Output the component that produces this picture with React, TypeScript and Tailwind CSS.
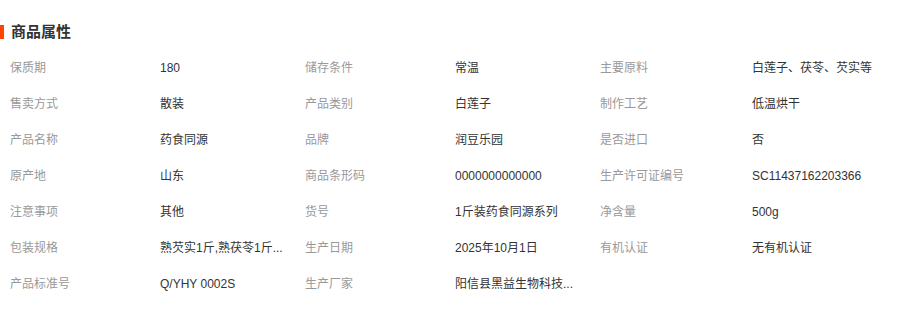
const rows: [string, string][][] = [
  [["保质期", "180"], ["储存条件", "常温"], ["主要原料", "白莲子、茯苓、芡实等"]],
  [["售卖方式", "散装"], ["产品类别", "白莲子"], ["制作工艺", "低温烘干"]],
  [["产品名称", "药食同源"], ["品牌", "润豆乐园"], ["是否进口", "否"]],
  [["原产地", "山东"], ["商品条形码", "0000000000000"], ["生产许可证编号", "SC11437162203366"]],
  [["注意事项", "其他"], ["货号", "1斤装药食同源系列"], ["净含量", "500g"]],
  [["包装规格", "熟芡实1斤,熟茯苓1斤..."], ["生产日期", "2025年10月1日"], ["有机认证", "无有机认证"]],
  [["产品标准号", "Q/YHY 0002S"], ["生产厂家", "阳信县黑益生物科技..."]],
]

export default function App() {
  return (
    <div className="w-[914px] h-[314px] bg-white font-['Liberation_Sans','Noto_Sans_CJK_SC',sans-serif]">
      <div className="flex items-center h-5 pt-[22px] box-content">
        <span className="w-[4px] h-[14px] bg-[#ff4400]" />
        <h2 className="ml-[7px] text-[15px] font-bold text-[#333]">商品属性</h2>
      </div>

      <div className="mt-[8px] pl-[10px]">
        {rows.map((row, i) => (
          <div key={i} className="flex h-9 items-center text-xs">
            {row.map(([label, value], j) => (
              <div key={label} className="flex w-[295px]">
                <span className={j === 2 ? "w-[152px] text-[#999]" : "w-[150px] text-[#999]"}>{label}</span>
                <span className="whitespace-nowrap text-[#333]">{value}</span>
              </div>
            ))}
          </div>
        ))}
      </div>
    </div>
  )
}
